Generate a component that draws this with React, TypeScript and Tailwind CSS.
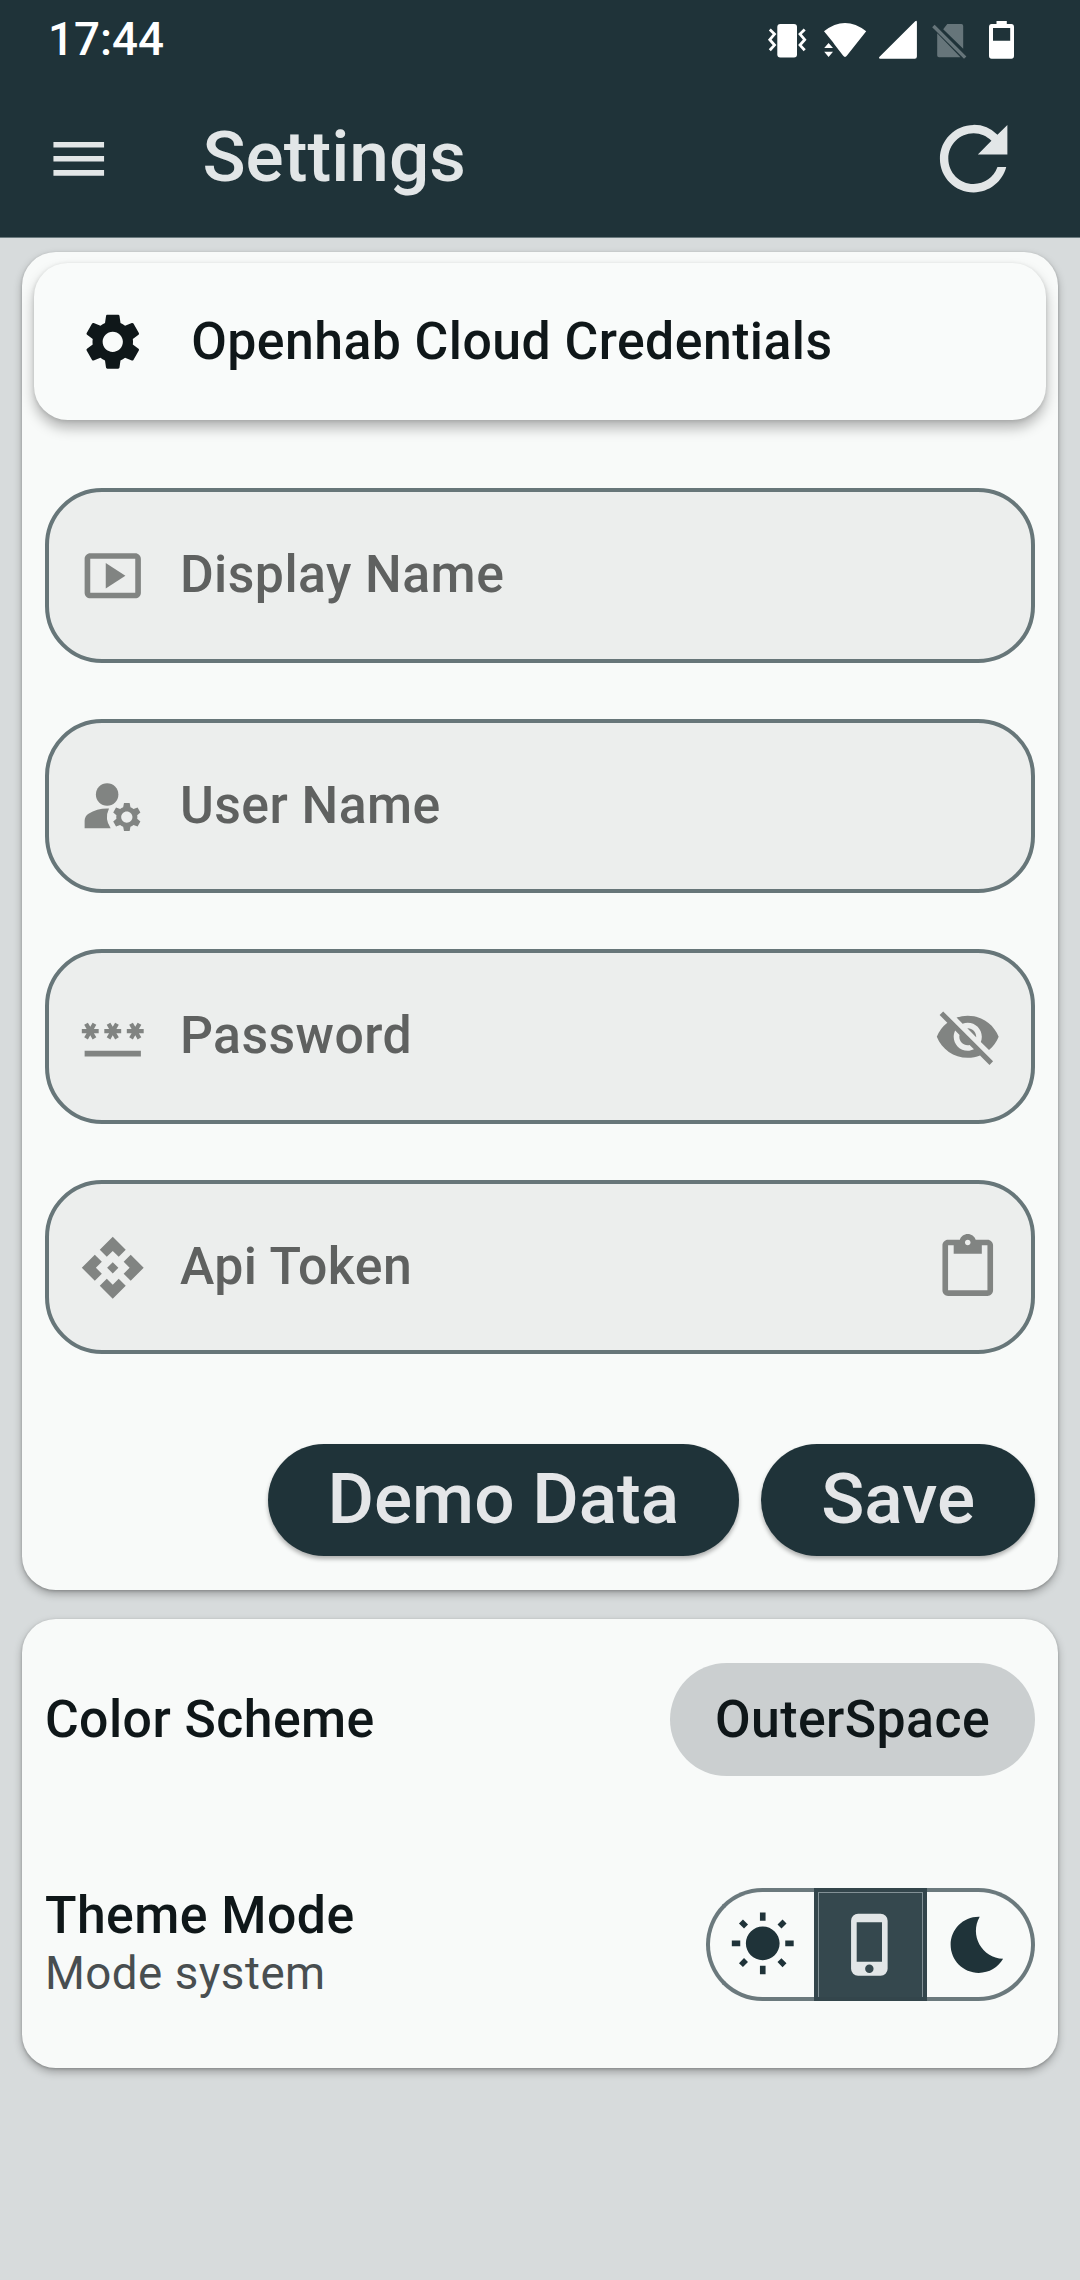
import type { ReactNode } from "react";
import {
  MdApi,
  MdBedtime,
  MdContentPaste,
  MdManageAccounts,
  MdMenu,
  MdPassword,
  MdPhoneIphone,
  MdRefresh,
  MdSettings,
  MdVisibilityOff,
  MdWbSunny,
} from "react-icons/md";

const icon = "size-[67.5px] shrink-0";

function SmartDisplayIcon() {
  return (
    <svg viewBox="0 0 24 24" fill="currentColor" className={icon}>
      <path d="M9.5 7.5v9l7-4.5z" />
      <path d="M20 4H4c-1.1 0-2 .9-2 2v12c0 1.1.9 2 2 2h16c1.1 0 2-.9 2-2V6c0-1.1-.9-2-2-2zm0 14.01H4V5.99h16v12.02z" />
    </svg>
  );
}

function StatusIcons() {
  return (
    <svg viewBox="0 0 250 42" width="250" height="42" fill="#fff">
      {/* vibrate */}
      <rect x="12.3" y="5" width="19.7" height="33.5" rx="3" />
      <path
        d="M4.8 10.5l4.7 4.6-4.7 5.6 4.7 5.4-4.7 5.2M39.7 10.5l-4.7 4.6 4.7 5.6-4.7 5.4 4.7 5.2"
        fill="none"
        stroke="#fff"
        strokeWidth="2.8"
      />
      {/* wifi with data arrows */}
      <path d="M59 12.3Q80 -4.2 101.2 12.3L82 36.5Q80 39.3 78 36.5L69.5 25.5L67.8 23Z" />
      <path d="M63.6 24L68 29H59.2zM59.2 32.8H68L63.6 38z" />
      {/* signal */}
      <path d="M150.2 2.3Q151.7 1 151.9 3V37.6Q151.9 39.8 149.7 39.8H115.3Q113 39 114.8 37.4Z" />
      {/* missing sim */}
      <g fill="#66757a">
        <path d="M182.3 5H196.4Q198.2 5 198.2 7V29.8L178.2 10.2ZM172.2 14.2L195.5 38.2H174Q172.2 38.2 172.2 36.4Z" />
        <path d="M167.2 8.2L169.6 5.8L201.4 37.4L199 39.8Z" />
      </g>
      {/* battery */}
      <path
        fillRule="evenodd"
        d="M231.5 2H241.8V5H246.3Q249 5 249 8V36.8Q249 39.8 246.3 39.8H226.7Q224 39.8 224 36.8V8Q224 5 226.7 5H231.5ZM228 9V21.8H245.2V9Z"
      />
    </svg>
  );
}

function Field({ lead, label, trail }: { lead: ReactNode; label: string; trail?: ReactNode }) {
  return (
    <div className="flex h-[174.4px] items-center rounded-[57px] border-4 border-[#677679] bg-[#eceeed] pl-[30px] pr-[29.75px] text-[#818482]">
      {lead}
      <span className="ml-[33.5px] flex-1 pb-px text-[51.75px] font-medium leading-none tracking-[0.45px] text-[#5f6160]">
        {label}
      </span>
      {trail}
    </div>
  );
}

function PillButton({ children }: { children: ReactNode }) {
  return (
    <button className="flex h-[112.5px] items-center rounded-full bg-[#1f3339] px-[60px] pb-[4px] text-[71.2px] font-medium leading-none text-[#e4e6e8] shadow-[0_3px_4px_rgba(0,0,0,0.3)]">
      {children}
    </button>
  );
}

export default function App() {
  return (
    <div className="flex h-[2280px] w-[1080px] flex-col bg-[#d7dbdc] font-['Roboto',sans-serif] text-[#0f1719]">
      <header className="flex h-[238px] flex-col border-b border-[#6b7b7f] bg-[#1f3339]">
        <div className="flex h-[80px] items-center justify-between pb-px pl-[48px] pr-[65px] text-[45.7px] font-medium leading-none text-white">
          <span>17:44</span>
          <StatusIcons />
        </div>
        <div className="flex flex-1 items-center pl-[45px] pr-[56px] pt-px text-[#e2e6e7]">
          <MdMenu className={icon} />
          <h1 className="ml-[90px] flex-1 pb-[5px] text-[71.2px] font-medium leading-none">Settings</h1>
          <MdRefresh className="size-[101.25px]" />
        </div>
      </header>

      <main className="flex flex-col gap-[28.4px] px-[22.4px] pt-[14px]">
        <section className="flex h-[1338.2px] flex-col rounded-[33.75px] bg-[#f8faf9] p-[11.25px] shadow-[0_4px_8px_rgba(0,0,0,0.28),0_1px_3px_rgba(0,0,0,0.2)]">
          <div className="flex h-[157px] shrink-0 items-center rounded-[33.75px] bg-[#f9fbfa] pl-[45px] shadow-[0_8px_13px_rgba(0,0,0,0.28),0_1px_4px_rgba(0,0,0,0.12)]">
            <MdSettings className={icon} />
            <h2 className="ml-[45px] text-[51.75px] font-medium leading-none tracking-[0.45px]">
              Openhab Cloud Credentials
            </h2>
          </div>
          <div className="mt-[67.9px] flex flex-col gap-[56.25px] px-[11.25px]">
            <Field lead={<SmartDisplayIcon />} label="Display Name" />
            <Field lead={<MdManageAccounts className={icon} />} label="User Name" />
            <Field
              lead={<MdPassword className={icon} />}
              label="Password"
              trail={<MdVisibilityOff className={icon} />}
            />
            <Field
              lead={<MdApi className={icon} />}
              label="Api Token"
              trail={<MdContentPaste className={icon} />}
            />
          </div>
          <div className="mt-[89.5px] flex justify-end gap-[22px] px-[11.25px]">
            <PillButton>Demo Data</PillButton>
            <PillButton>Save</PillButton>
          </div>
        </section>

        <section className="flex h-[449.8px] flex-col rounded-[33.75px] bg-[#f8faf9] px-[22.5px] pt-[44.8px] shadow-[0_4px_8px_rgba(0,0,0,0.28),0_1px_3px_rgba(0,0,0,0.2)]">
          <div className="flex h-[112.5px] items-center justify-between text-[51.75px] font-medium leading-none tracking-[0.45px]">
            <span>Color Scheme</span>
            <button className="flex h-full items-center rounded-full bg-[#cbcfd0] px-[45px]">OuterSpace</button>
          </div>
          <div className="mt-[104.6px] flex h-[128px] items-center justify-between">
            <div className="flex flex-col pb-[13px]">
              <span className="text-[51.75px] font-medium leading-[72px] tracking-[0.45px]">Theme Mode</span>
              <span className="text-[45.7px] leading-[43px] tracking-[0.5px] text-[#484e50]">Mode system</span>
            </div>
            <div className="flex h-[112.5px] w-[328.7px] text-[#1f3339]">
              <div className="flex flex-1 items-center justify-center rounded-l-full border-4 border-r-0 border-[#6b797d]">
                <MdWbSunny className={icon} />
              </div>
              <div className="flex w-[113px] items-stretch border-4 border-[#33454b] bg-[#35484e]">
                <div className="flex flex-1 items-center justify-center border border-b-0 border-[#839196] text-[#e2e6e7]">
                  <MdPhoneIphone className={icon} />
                </div>
              </div>
              <div className="flex flex-1 items-center justify-center rounded-r-full border-4 border-l-0 border-[#6b797d]">
                <MdBedtime className={icon} />
              </div>
            </div>
          </div>
        </section>
      </main>
    </div>
  );
}
